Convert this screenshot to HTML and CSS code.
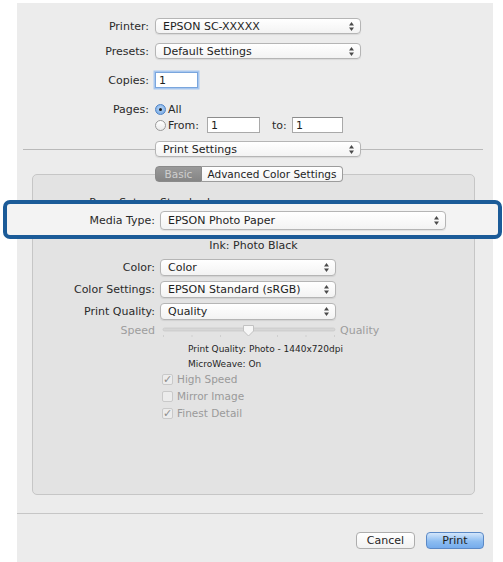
FILE: index.html
```html
<!DOCTYPE html>
<html>
<head>
<meta charset="utf-8">
<link rel="stylesheet" href="styles.css">
</head>
<body>
<div class="dialog">
  <div class="top">
    <div class="row r-printer">
      <span class="lbl">Printer:</span>
      <div class="popup w206">EPSON SC-XXXXX<svg class="arr" width="5" height="9" viewBox="0 0 5 9"><polygon points="0,3.5 2.5,0 5,3.5"/><polygon points="0,5.5 5,5.5 2.5,9"/></svg></div>
    </div>
    <div class="row r-presets">
      <span class="lbl">Presets:</span>
      <div class="popup w206">Default Settings<svg class="arr" width="5" height="9" viewBox="0 0 5 9"><polygon points="0,3.5 2.5,0 5,3.5"/><polygon points="0,5.5 5,5.5 2.5,9"/></svg></div>
    </div>
    <div class="row r-copies">
      <span class="lbl">Copies:</span>
      <div class="field focus w43">1</div>
    </div>
    <div class="row r-all">
      <span class="lbl">Pages:</span>
      <span class="radio on"></span>
      <span class="rtext">All</span>
    </div>
    <div class="row r-from">
      <span class="lbl"></span>
      <span class="radio"></span>
      <span class="rtext from-lbl">From:</span>
      <div class="field w53">1</div>
      <span class="to-lbl">to:</span>
      <div class="field w51">1</div>
    </div>
    <div class="row r-sep">
      <span class="hline left"></span>
      <div class="popup w206">Print Settings<svg class="arr" width="5" height="9" viewBox="0 0 5 9"><polygon points="0,3.5 2.5,0 5,3.5"/><polygon points="0,5.5 5,5.5 2.5,9"/></svg></div>
      <span class="hline right"></span>
    </div>
    <div class="tabs">
      <span class="tab basic">Basic</span>
      <span class="tab adv">Advanced Color Settings</span>
    </div>
  </div>

  <div class="group">
    <div class="grow g-pagesetup">
      <span class="glbl">Page Setup:</span>
      <span class="gval">Standard</span>
    </div>
    <div class="grow g-media">
      <span class="glbl">Media Type:</span>
      <div class="popup w286 tall">EPSON Photo Paper<svg class="arr" width="5" height="9" viewBox="0 0 5 9"><polygon points="0,3.5 2.5,0 5,3.5"/><polygon points="0,5.5 5,5.5 2.5,9"/></svg></div>
    </div>
    <div class="grow g-ink">Ink: Photo Black</div>
    <div class="grow g-color">
      <span class="glbl">Color:</span>
      <div class="popup w176 mid">Color<svg class="arr" width="5" height="9" viewBox="0 0 5 9"><polygon points="0,3.5 2.5,0 5,3.5"/><polygon points="0,5.5 5,5.5 2.5,9"/></svg></div>
    </div>
    <div class="grow g-cs">
      <span class="glbl">Color Settings:</span>
      <div class="popup w176 mid">EPSON Standard (sRGB)<svg class="arr" width="5" height="9" viewBox="0 0 5 9"><polygon points="0,3.5 2.5,0 5,3.5"/><polygon points="0,5.5 5,5.5 2.5,9"/></svg></div>
    </div>
    <div class="grow g-pq">
      <span class="glbl">Print Quality:</span>
      <div class="popup w176 mid">Quality<svg class="arr" width="5" height="9" viewBox="0 0 5 9"><polygon points="0,3.5 2.5,0 5,3.5"/><polygon points="0,5.5 5,5.5 2.5,9"/></svg></div>
    </div>
    <div class="grow g-slider">
      <span class="glbl dim">Speed</span>
      <svg class="track" width="174" height="14" viewBox="0 0 174 14">
        <rect x="1" y="3" width="172" height="3" rx="1.5" fill="#d6d6d6" stroke="#c4c4c4" stroke-width="0.6"/>
        <g fill="#cfcfcf">
          <rect x="1" y="10" width="1" height="2"/>
          <rect x="29.5" y="10" width="1" height="2"/>
          <rect x="58" y="10" width="1" height="2"/>
          <rect x="115" y="10" width="1" height="2"/>
          <rect x="143.5" y="10" width="1" height="2"/>
          <rect x="172" y="10" width="1" height="2"/>
        </g>
        <path d="M81.5 0.5 H91.5 V6 L86.5 11 L81.5 6 Z" fill="#f7f7f7" stroke="#c2c2c2" stroke-width="1" stroke-linejoin="round"/>
      </svg>
      <span class="qual dim">Quality</span>
    </div>
    <div class="grow info g-info1">Print Quality: Photo - 1440x720dpi</div>
    <div class="grow info g-info2">MicroWeave: On</div>
    <div class="grow chk g-c1"><span class="box">✓</span><span class="ctext">High Speed</span></div>
    <div class="grow chk g-c2"><span class="box"></span><span class="ctext">Mirror Image</span></div>
    <div class="grow chk g-c3"><span class="box">✓</span><span class="ctext">Finest Detail</span></div>
  </div>

  <div class="footer-line"></div>
  <div class="buttons">
    <span class="btn cancel">Cancel</span>
    <span class="btn print">Print</span>
  </div>
</div>
</body>
</html>
```

FILE: styles.css
```css
html, body {
  margin: 0;
  padding: 0;
  background: #ffffff;
}
body {
  font-family: "DejaVu Sans", "Liberation Sans", sans-serif;
  font-size: 11px;
  color: #2a2a2a;
}
.dialog {
  margin: 3px 0 0 17px;
  width: 476px;
  height: 559px;
  background: #ececec;
  display: flex;
  flex-direction: column;
  box-sizing: border-box;
}
.top {
  display: flex;
  flex-direction: column;
  padding-top: 15px;
}
.row {
  display: flex;
  align-items: center;
  height: 16px;
}
.lbl {
  width: 132px;
  margin-right: 6px;
  text-align: right;
  flex: none;
}
.r-presets { margin-top: 9px; }
.r-copies { margin-top: 13px; }
.r-all { margin-top: 14px; height: 14px; }
.r-from { margin-top: 1px; }
.r-sep { margin-top: 8px; }

.popup {
  box-sizing: border-box;
  height: 16px;
  border: 1px solid #b5b5b5;
  border-radius: 4px;
  background: linear-gradient(#ffffff, #f3f3f3);
  box-shadow: 0 1px 1px rgba(0,0,0,0.08);
  padding-left: 7px;
  display: flex;
  align-items: center;
  position: relative;
  color: #1e1e1e;
  flex: none;
}
.popup.tall { height: 19px; }
.popup.mid { height: 17px; }
.popup .arr {
  margin-left: auto;
  margin-right: 6px;
  fill: #4a4a4a;
}
.w206 { width: 206px; }
.w286 { width: 286px; }
.w176 { width: 176px; }

.field {
  box-sizing: border-box;
  height: 16px;
  background: #ffffff;
  border: 1px solid #a9a9a9;
  border-top-color: #8c8c8c;
  padding-left: 3px;
  display: flex;
  align-items: center;
  flex: none;
  color: #1e1e1e;
}
.field.focus {
  border-color: #7aa6dd;
  box-shadow: 0 0 0 1.5px #a8c7ef;
}
.w43 { width: 43px; }
.w53 { width: 53px; }
.w51 { width: 51px; }

.radio {
  box-sizing: border-box;
  width: 11px;
  height: 11px;
  border-radius: 50%;
  border: 1px solid #9a9a9a;
  background: linear-gradient(#ffffff, #eaeaea);
  flex: none;
  position: relative;
}
.radio.on {
  border-color: #4f83c6;
  background: radial-gradient(circle at 50% 40%, #b9d6f6, #6ea3e2);
}
.radio.on::after {
  content: "";
  position: absolute;
  left: 3px;
  top: 3px;
  width: 3px;
  height: 3px;
  border-radius: 50%;
  background: #1a1a1a;
}
.rtext { margin-left: 2px; }
.from-lbl { width: 39px; }
.to-lbl { margin-left: 12px; width: 20px; }

.hline {
  height: 1px;
  background: #b9b9b9;
  flex: none;
}
.hline.left { margin-left: 6px; width: 132px; }
.hline.right { width: 122px; }

.tabs {
  display: flex;
  margin-top: 9px;
  margin-left: 138px;
  height: 16px;
  position: relative;
  z-index: 2;
}
.tab {
  box-sizing: border-box;
  height: 16px;
  display: flex;
  align-items: center;
  justify-content: center;
  font-size: 10.5px;
  border: 1px solid #9c9c9c;
}
.tab.basic {
  width: 47px;
  background: linear-gradient(#9a9a9a, #858585);
  color: #cfcfcf;
  border-radius: 4px 0 0 4px;
  border-color: #8a8a8a;
}
.tab.adv {
  width: 141px;
  background: linear-gradient(#ffffff, #f3f3f3);
  color: #1e1e1e;
  border-left: none;
  border-radius: 0 4px 4px 0;
}

.group {
  box-sizing: border-box;
  margin-top: -8px;
  margin-left: 15px;
  width: 443px;
  height: 321px;
  border: 1px solid #c6c6c6;
  border-radius: 5px;
  background: #e3e3e3;
  padding-top: 20px;
  display: flex;
  flex-direction: column;
  flex: none;
}
.grow {
  display: flex;
  align-items: center;
  height: 14px;
}
.glbl {
  width: 122px;
  margin-right: 5px;
  text-align: right;
  flex: none;
}
.g-pagesetup { color: #2a2a2a; }
.g-media {
  margin-top: 2px;
  height: 19px;
  position: relative;
}
.g-media::before {
  content: "";
  position: absolute;
  left: -30px;
  top: -11px;
  width: 499px;
  height: 39px;
  box-sizing: border-box;
  border: 4px solid #1b5b98;
  border-radius: 7px;
  background: #f3f3f3;
  z-index: 0;
}
.g-media > * {
  position: relative;
  z-index: 1;
}
.g-ink {
  margin-top: 8px;
  justify-content: center;
}
.g-color { margin-top: 7px; height: 17px; }
.g-cs { margin-top: 5px; height: 17px; }
.g-pq { margin-top: 5px; height: 17px; }
.g-slider { margin-top: 3px; }
.dim { color: #9d9d9d; }
.g-slider .glbl { margin-right: 7px; }
.track { flex: none; margin-top: 4px; }
.qual { margin-left: 4px; }
.info {
  font-size: 9px;
  padding-left: 155px;
  color: #262626;
}
.g-info1 { margin-top: 5px; }
.g-info2 { margin-top: 1px; }
.chk {
  padding-left: 129px;
  color: #9a9a9a;
  font-size: 10.5px;
}
.g-c1 { margin-top: 1px; }
.g-c2 { margin-top: 3px; }
.g-c3 { margin-top: 3px; }
.box {
  box-sizing: border-box;
  width: 11px;
  height: 11px;
  border: 1px solid #c9c9c9;
  border-radius: 2px;
  background: #ececec;
  display: flex;
  align-items: center;
  justify-content: center;
  font-size: 11px;
  line-height: 1;
  color: #8e8e8e;
  margin-right: 4px;
  flex: none;
}

.footer-line {
  margin-top: 18px;
  width: 466px;
  height: 1px;
  background: #c6c6c6;
  flex: none;
}
.buttons {
  margin-top: 18px;
  width: 467px;
  display: flex;
  justify-content: flex-end;
}
.btn {
  box-sizing: border-box;
  height: 17px;
  display: flex;
  align-items: center;
  justify-content: center;
  border-radius: 4px;
  font-size: 11px;
  color: #1e1e1e;
}
.btn.cancel {
  width: 59px;
  margin-right: 11px;
  border: 1px solid #adadad;
  background: linear-gradient(#ffffff, #f1f1f1);
}
.btn.print {
  width: 58px;
  border: 1px solid #5b89c6;
  background: linear-gradient(#d3e6fb, #8dbdf1 55%, #75acec);
}
```
